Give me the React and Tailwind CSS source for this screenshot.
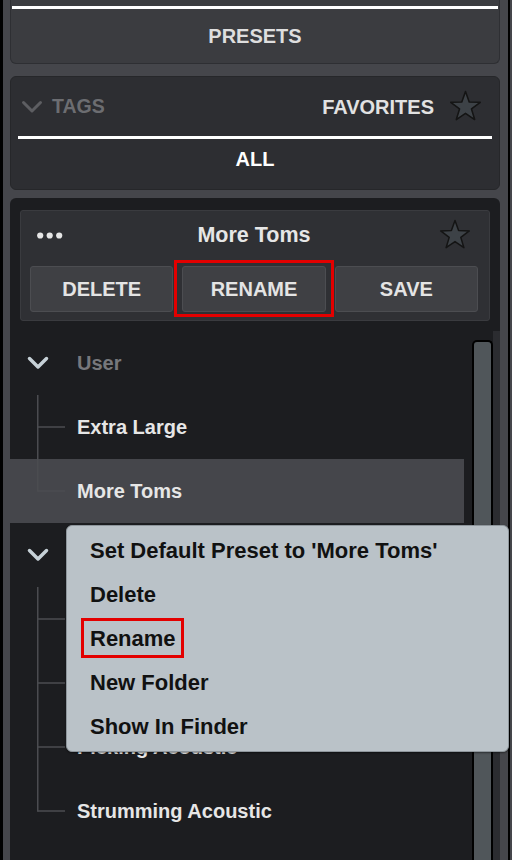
import React from 'react';

const Star = ({ className }) => (
  <svg viewBox="0 0 32 32" className={className}>
    <polygon
      points="16,1.5 19.6,11.6 30.3,11.9 21.8,18.4 24.9,28.7 16,22.6 7.1,28.7 10.2,18.4 1.7,11.9 12.4,11.6"
      fill="#3d4247"
      stroke="#141414"
      strokeWidth="1.5"
      strokeLinejoin="round"
    />
  </svg>
);

const Chevron = ({ className, color, stroke }) => (
  <svg viewBox="0 0 22 14" className={className}>
    <polyline points="2.5,2.5 11,11 19.5,2.5" fill="none" stroke={color} strokeWidth={stroke} strokeLinecap="round" strokeLinejoin="round" />
  </svg>
);

const TreeLines = ({ last }) => (
  <svg width="67" height="64" className="shrink-0">
    <line x1="27.75" y1="0" x2="27.75" y2={last ? 32.75 : 64} stroke="#4b4c50" strokeWidth="1.5" />
    <line x1="27.75" y1="32" x2="55" y2="32" stroke="#4b4c50" strokeWidth="1.5" />
  </svg>
);

const FolderRow = ({ name }) => (
  <div className="flex h-[64px] items-center">
    <Chevron className="ml-[17px] h-[14px] w-[22px]" color="#c6d1d7" stroke="3.5" />
    <span className="ml-[28px] text-[20px] font-bold text-[#77787c]">{name}</span>
  </div>
);

const ChildRow = ({ name, last, active }) => (
  <div className={`flex h-[64px] items-center ${active ? 'bg-[#45464b]' : ''}`}>
    <TreeLines last={last} />
    <span className="text-[20px] font-bold text-[#e6e6e6]">{name}</span>
  </div>
);

// rows hidden under the context menu are left without labels
const tree = [
  { folder: 'User', items: ['Extra Large', 'More Toms'] },
  { folder: '', items: ['', '', 'Picking Acoustic', 'Strumming Acoustic'] },
];

const menuItems = ["Set Default Preset to 'More Toms'", 'Delete', 'Rename', 'New Folder', 'Show In Finder'];

export default function App() {
  return (
    <div className="relative flex h-[860px] w-[512px] overflow-hidden border-l-[3px] border-black bg-[#45464b] font-['Liberation_Sans',Arial,sans-serif]">
      <div className="flex min-w-0 flex-1 flex-col pl-[7px] pr-[8px]">
        {/* Presets tab */}
        <div className="flex h-[64px] flex-col rounded-b-[6px] border border-t-0 border-[#2e2f33] bg-[#3b3c40]">
          <div className="mx-px mt-[6px] h-[3px] bg-white" />
          <div className="flex flex-1 items-center justify-center text-[20px] font-bold text-[#dedede]">PRESETS</div>
        </div>

        {/* Tags / favorites */}
        <div className="mt-[12px] flex h-[114px] flex-col rounded-[6px] border border-[#26272a] bg-[#2d2e32]">
          <div className="flex h-[59px] items-center pl-[10px] pr-[17px]">
            <Chevron className="h-[14px] w-[22px]" color="#5d5e62" stroke="3" />
            <span className="ml-[9px] text-[19.5px] font-bold text-[#6c6d71]">TAGS</span>
            <span className="ml-auto text-[20px] font-bold text-[#e2e2e2]">FAVORITES</span>
            <Star className="ml-[15px] h-[33px] w-[33px]" />
          </div>
          <div className="mx-[7px] h-[3px] bg-white" />
          <div className="flex h-[40px] items-center justify-center text-[20px] font-bold text-white">ALL</div>
        </div>

        {/* Preset browser */}
        <div className="mt-[8px] flex flex-1 flex-col rounded-t-[6px] bg-[#1c1d20]">
          <div className="mx-[10px] mt-[12px] flex h-[111px] flex-col rounded-[3px] border border-[#3a3b3f] bg-[#2f3034]">
            <div className="grid h-[48px] grid-cols-[1fr_auto_1fr] items-center pl-[16px] pr-[18px]">
              <svg width="26" height="7" viewBox="0 0 26 7">
                <circle cx="3.2" cy="3.5" r="3.1" fill="#e6e6e6" />
                <circle cx="12.7" cy="3.5" r="3.1" fill="#e6e6e6" />
                <circle cx="22.2" cy="3.5" r="3.1" fill="#e6e6e6" />
              </svg>
              <span className="text-[21.5px] font-bold text-[#e6e6e6]">More Toms</span>
              <Star className="h-[32px] w-[32px] justify-self-end" />
            </div>
            <div className="mt-[7px] grid grid-cols-3 gap-[9px] pl-[9px] pr-[11px]">
              <button className="flex h-[46px] items-center justify-center rounded-[3px] border border-[#4c4d51] bg-[#3f4044] text-[20px] font-bold text-[#e4e4e4]">DELETE</button>
              <div className="relative">
                <button className="flex h-[46px] w-full items-center justify-center rounded-[3px] border border-[#4c4d51] bg-[#3f4044] text-[20px] font-bold text-[#e4e4e4]">RENAME</button>
                <div className="absolute -top-[6px] -bottom-[5px] -left-[8px] -right-[8px] border-[3px] border-[#e30000]" />
              </div>
              <button className="flex h-[46px] items-center justify-center rounded-[3px] border border-[#4c4d51] bg-[#3f4044] text-[20px] font-bold text-[#e4e4e4]">SAVE</button>
            </div>
          </div>

          <div className="mt-[10px] flex flex-1">
            <div className="flex min-w-0 flex-1 flex-col">
              {tree.map((group, g) => (
                <div key={g}>
                  <FolderRow name={group.folder} />
                  {group.items.map((item, i) => (
                    <ChildRow key={i} name={item} last={i === group.items.length - 1} active={item === 'More Toms'} />
                  ))}
                </div>
              ))}
            </div>
            <div className="flex w-[36px] pl-[8px]">
              <div className="mt-[9px] w-[21px] rounded-t-[5px] border-2 border-b-0 border-black bg-[#50565a]" />
              <div className="w-[7px] bg-[#2b2c30]" />
            </div>
          </div>
        </div>
      </div>
      <div className="w-[2px] bg-black" />
      <div className="w-[2px] bg-[#45464b]" />

      {/* Context menu */}
      <div className="absolute left-[63px] top-[525px] flex w-[443px] flex-col rounded-[6px] border border-[#8e969c] bg-[#bac2c8] pb-[2px] pt-[3px] shadow-[0_1px_2px_rgba(0,0,0,0.45)]">
        {menuItems.map((label) => (
          <div key={label} className="flex h-[44px] items-center pl-[23px] text-[22px] font-bold text-[#111111]">
            <span className="relative leading-[24px]">
              {label}
              {label === 'Rename' && (
                <span className="absolute -top-[9px] -bottom-[7px] -left-[9px] -right-[8px] border-[3px] border-[#e30000]" />
              )}
            </span>
          </div>
        ))}
      </div>
    </div>
  );
}
